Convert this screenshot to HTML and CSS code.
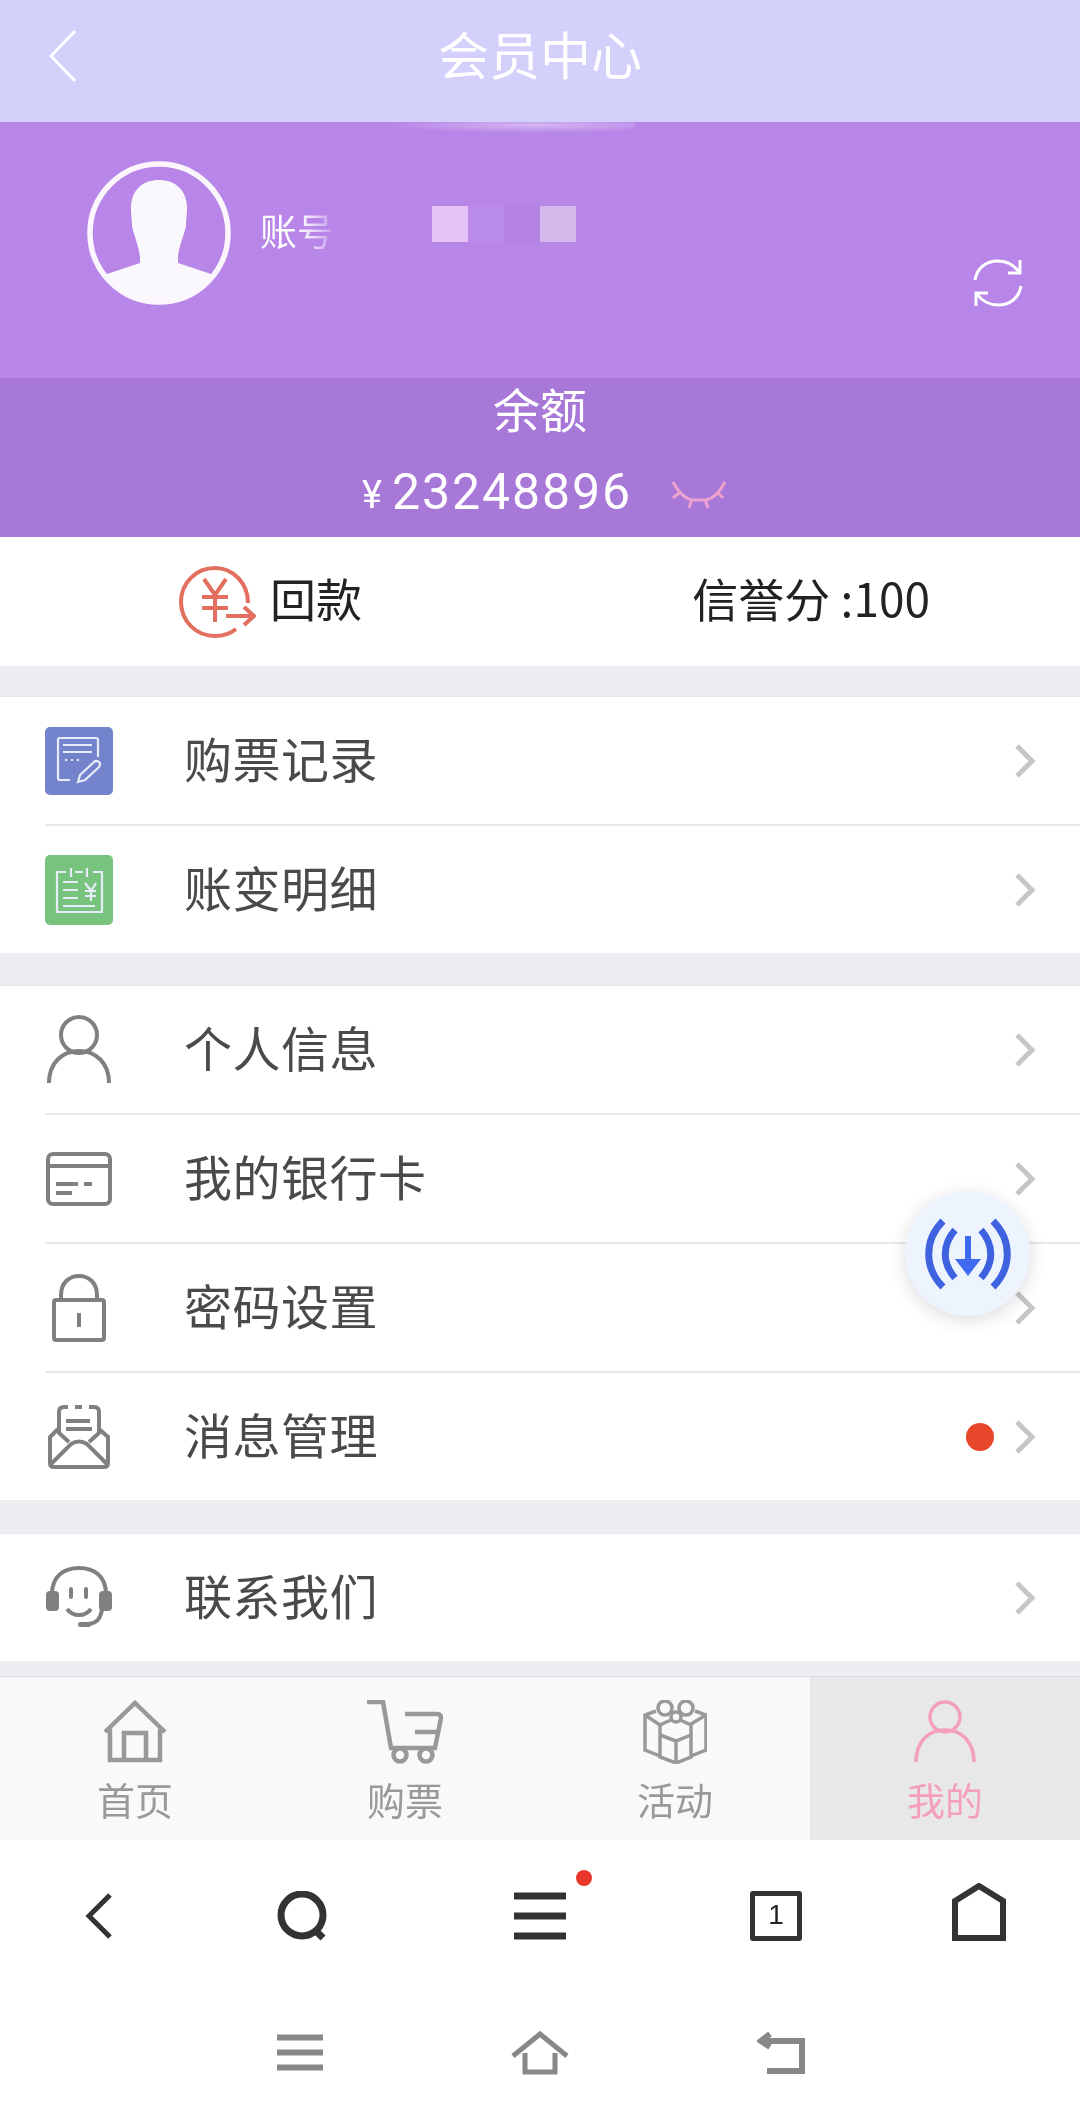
FILE: index.html
```html
<!DOCTYPE html>
<html lang="zh-CN">
  <head>
    <meta charset="UTF-8" />
    <title>会员中心</title>
    <link rel="stylesheet" href="styles.css">
  </head>
  <body>
    <div class="page">
      <!-- Header -->
      <header class="topbar">
        <svg class="top-back" width="28" height="54" viewBox="0 0 28 54"><path d="M26 2 2 27l24 25" /></svg>
        <h1 class="top-title">会员中心</h1>
      </header>

      <!-- Account panel -->
      <section class="account">
        <div class="account-glow"></div>
        <svg class="avatar" width="146" height="146" viewBox="0 0 146 146">
          <circle cx="73" cy="73" r="69" fill="none" stroke="#fbf6fd" stroke-width="5.5" />
          <path fill="#fbf8fd" d="M73 20c-16 0-28 10-28 28 0 8 1 12 1 16-1 4 8 24 8 34v5L18 115a69 69 0 0 0 110 0L92 103v-5c0-10 9-30 8-34 0-4 1-8 1-16 0-18-12-28-28-28z" />
        </svg>
        <span class="account-label">账号</span>
        <div class="mosaic">
          <i class="m1"></i><i class="m2"></i><i class="m3"></i><i class="m4"></i>
        </div>
        <svg class="refresh" width="52" height="52" viewBox="0 0 52 52">
          <path d="M3 23C5 11 14 4 26 4c9 0 16 4 21 11M49 29c-2 12-11 19-23 19-9 0-16-4-21-11" />
          <path d="M48 3v13H36M4 49V36h12" />
        </svg>
      </section>

      <!-- Balance -->
      <section class="balance">
        <div class="balance-label">余额</div>
        <div class="balance-amount">
          <span class="yen">¥</span><span class="amount">23248896</span>
          <svg class="eye" width="54" height="28" viewBox="0 0 54 28">
            <path d="M1 1c6 11 13 18 21 18h10c8 0 15-7 21-18M7 12l-6 5M20 18l-3 9M33 18l3 9M46 12l5 5" />
          </svg>
        </div>
      </section>

      <!-- Repay / credit -->
      <section class="quick">
        <div class="quick-left">
          <svg width="78" height="74" viewBox="0 0 78 74">
            <path class="q-ring" d="M70 38C70 18 55 3 37 3 18 3 3 18 3 37s15 34 34 34c8 0 15-2 21-7" />
            <path class="q-ring" d="M26 14l11 16 11-16M24 32h26M24 43h26M37 30v27M48 51h28M66 42l10 9-10 9" />
          </svg>
          <span>回款</span>
        </div>
        <div class="quick-right">信誉分 :100</div>
      </section>

      <div class="gap gap-a"></div>

      <section class="group">
        <div class="row">
          <span class="row-icon">
            <svg width="68" height="68" viewBox="0 0 68 68">
              <rect width="68" height="68" rx="5" fill="#7484cc" />
              <path class="tile" d="M53 30V13q0-2-2-2H15q-2 0-2 2v38q0 2 2 2h10M18 18h29M18 25h29M20 33h2M26 33h2M32 33h2" />
              <path class="tile" d="M33 55l2-7 14-13q2-2 5 0 2 2 0 5L40 53z" />
            </svg>
          </span>
          <span class="row-text">购票记录</span>
          <svg class="chev" width="22" height="36" viewBox="0 0 22 36"><path d="M3 3l15 15L3 33" /></svg>
        </div>
        <div class="row">
          <span class="row-icon">
            <svg width="68" height="70" viewBox="0 0 68 70">
              <rect width="68" height="70" rx="5" fill="#78c47e" />
              <path class="tile" d="M21 17h-9v40h45V17h-9M30 17h8M26 13v9M42 13v9M18 27h15M18 35h15M18 43h15M18 51h32" />
              <path class="tile" d="M40 28l6 8 5-8M40 36h11M40 41h11M46 36v10" />
            </svg>
          </span>
          <span class="row-text">账变明细</span>
          <svg class="chev" width="22" height="36" viewBox="0 0 22 36"><path d="M3 3l15 15L3 33" /></svg>
        </div>
      </section>

      <div class="gap"></div>

      <section class="group">
        <div class="row">
          <span class="row-icon">
            <svg class="line" width="66" height="72" viewBox="0 0 66 72">
              <circle cx="33" cy="21" r="18" />
              <path d="M3 69c0-20 13-32 30-32s30 12 30 32" />
            </svg>
          </span>
          <span class="row-text">个人信息</span>
          <svg class="chev" width="22" height="36" viewBox="0 0 22 36"><path d="M3 3l15 15L3 33" /></svg>
        </div>
        <div class="row">
          <span class="row-icon">
            <svg class="line" width="66" height="54" viewBox="0 0 66 54">
              <rect x="2" y="2" width="62" height="50" rx="5" />
              <path d="M2 14h62M10 32h22M10 41h16M38 32h8" />
            </svg>
          </span>
          <span class="row-text">我的银行卡</span>
          <svg class="chev" width="22" height="36" viewBox="0 0 22 36"><path d="M3 3l15 15L3 33" /></svg>
        </div>
        <div class="row">
          <span class="row-icon">
            <svg class="line" width="54" height="68" viewBox="0 0 54 68">
              <rect x="2" y="26" width="50" height="40" rx="2" />
              <path d="M9 26V21C9 9 17 2 27 2s18 7 18 19v5" />
              <path d="M27 39v14" stroke-width="4" />
            </svg>
          </span>
          <span class="row-text">密码设置</span>
          <svg class="chev" width="22" height="36" viewBox="0 0 22 36"><path d="M3 3l15 15L3 33" /></svg>
        </div>
        <div class="row">
          <span class="row-icon">
            <svg class="line" width="62" height="64" viewBox="0 0 62 64">
              <path d="M11 29V7q0-5 5-5h4M27 2h7M41 2h5q5 0 5 5v22M18 16h24M18 24h26" />
              <path d="M10 24 2 32v26q0 4 4 4h50q4 0 4-4V32l-9-8" />
              <path d="M2 60l21-21q8-5 16 0l21 21" />
              <path d="M11 28l10 9M51 28l-10 9" />
            </svg>
          </span>
          <span class="row-text">消息管理</span>
          <span class="row-dot"></span>
          <svg class="chev" width="22" height="36" viewBox="0 0 22 36"><path d="M3 3l15 15L3 33" /></svg>
        </div>
      </section>

      <div class="gap gap-c"></div>

      <section class="group">
        <div class="row">
          <span class="row-icon">
            <svg class="line" width="66" height="64" viewBox="0 0 66 64">
              <path d="M6 28C6 10 18 2 33 2s27 8 27 26" />
              <rect class="solid" x="0" y="25" width="13" height="20" rx="4" />
              <rect class="solid" x="53" y="25" width="13" height="20" rx="4" />
              <path d="M25 23v8M40 23v8" stroke-linecap="round" />
              <path d="M21 43c6 8 18 8 24 0M56 44c-2 9-5 13-13 14" />
              <rect class="solid" x="32" y="56" width="13" height="5" rx="2.5" />
            </svg>
          </span>
          <span class="row-text">联系我们</span>
          <svg class="chev" width="22" height="36" viewBox="0 0 22 36"><path d="M3 3l15 15L3 33" /></svg>
        </div>
      </section>

      <div class="gap gap-last"></div>

      <!-- Tab bar -->
      <nav class="tabs">
        <div class="tab">
          <svg class="tab-line tab-thick" width="64" height="64" viewBox="0 0 64 64">
            <path d="M2 32 32 3l30 29M7 29v31h50V29M21 60V33h22v27" />
          </svg>
          <span>首页</span>
        </div>
        <div class="tab">
          <svg class="tab-line tab-thick" width="76" height="64" viewBox="0 0 76 64">
            <path d="M0 2h16l8 46h44l6-30q0-4-4-4H38M48 32h23" />
            <circle cx="33" cy="55" r="6.5" />
            <circle cx="59" cy="55" r="6.5" />
          </svg>
          <span>购票</span>
        </div>
        <div class="tab">
          <svg class="tab-line" width="64" height="64" viewBox="0 0 64 64">
            <circle cx="22" cy="8" r="7" /><circle cx="43" cy="8" r="7" /><circle cx="33" cy="17" r="5" />
            <path d="M13 11 2 15v35l15 6M52 11l11 4v35l-15 6M2 15l15 10M63 15l-15 9" />
            <path d="M28 20 17 25v32l16 6 15-6V25l-11-5M17 35l16 6 15-6M33 41v22" />
          </svg>
          <span>活动</span>
        </div>
        <div class="tab tab-active">
          <svg class="tab-line" width="62" height="64" viewBox="0 0 62 64">
            <circle cx="31" cy="17" r="15" />
            <path d="M2 62c0-20 12-32 29-32s29 12 29 32" />
          </svg>
          <span>我的</span>
        </div>
      </nav>

      <!-- Browser toolbar -->
      <div class="browser">
        <svg class="bar-icon bar-back" width="28" height="48" viewBox="0 0 28 48"><path d="M25 3 4 24l21 21" /></svg>
        <svg class="bar-icon bar-search" width="52" height="50" viewBox="0 0 52 50">
          <circle cx="25" cy="24" r="21" /><path d="M37 38l9 9" />
        </svg>
        <div class="bar-menu">
          <svg class="bar-icon bar-thick" width="52" height="48" viewBox="0 0 52 48"><path d="M0 4h52M0 24h52M0 44h52" /></svg>
          <span class="bar-dot"></span>
        </div>
        <div class="bar-tabs">1</div>
        <svg class="bar-icon bar-home" width="54" height="58" viewBox="0 0 54 58">
          <path d="M3 18 27 3l24 15v37H3z" />
        </svg>
      </div>

      <!-- System nav -->
      <div class="sysnav">
        <svg class="nav-icon" width="46" height="38" viewBox="0 0 46 38"><path d="M0 3.5h46M0 18.5h46M0 33.5h46" /></svg>
        <svg class="nav-icon nav-thin" width="58" height="44" viewBox="0 0 58 44"><path d="M2 25 29 3l27 22M14 22v19h30V22" /></svg>
        <svg class="nav-icon" width="48" height="42" viewBox="0 0 48 42"><path d="M13 2 4 9l9 6M4 9h41v30H10" /></svg>
      </div>

      <!-- Floating download button -->
      <div class="float-btn">
        <svg width="86" height="72" viewBox="0 0 86 72">
          <path class="wave" d="M18 3C-1 22-1 50 18 69M68 3c19 19 19 47 0 66M30 12c-13 15-13 33 0 48M56 12c13 15 13 33 0 48" />
          <path fill="#3f6bf0" d="M40 18h6v23h10L43 58 30 41h10z" />
        </svg>
      </div>
    </div>
  </body>
</html>
```

FILE: styles.css
```css
/* Global */
html,
body {
  margin: 0;
  height: 100%;
  background: #fff;
  font-family: "Noto Sans CJK SC", "Noto Sans", sans-serif;
  color: #444;
}
.page {
  position: relative;
  width: 1080px;
  height: 2114px;
  overflow: hidden;
  filter: blur(0.5px);
}
svg {
  display: block;
}
/* Header */
.topbar {
  position: relative;
  display: flex;
  align-items: center;
  justify-content: center;
  height: 122px;
  background: #d3d0fb;
}
.top-back {
  position: absolute;
  left: 49px;
  top: 29px;
  fill: none;
  stroke: #fff;
  stroke-width: 3;
}
.top-title {
  margin: 0;
  padding-bottom: 16px;
  font-size: 51px;
  font-weight: 400;
  color: #fff;
  line-height: 1;
}
/* Account panel */
.account {
  position: relative;
  display: flex;
  align-items: flex-start;
  height: 256px;
  padding: 38px 56px 0 86px;
  box-sizing: border-box;
  background: #b885e8;
}
.account-glow {
  position: absolute;
  left: 385px;
  top: 0;
  width: 250px;
  height: 11px;
  background: radial-gradient(ellipse at 60% 30%, rgba(255, 255, 255, 0.4), rgba(255, 255, 255, 0) 70%);
}
.account-label {
  margin: 47px 0 0 28px;
  width: 76px;
  font-size: 37px;
  line-height: 46px;
  background: linear-gradient(90deg, #fff 50%, rgba(255, 255, 255, 0.7) 70%, rgba(255, 255, 255, 0.1));
  -webkit-background-clip: text;
  background-clip: text;
  color: transparent;
}
.mosaic {
  display: flex;
  margin: 46px 0 0 96px;
}
.mosaic i {
  display: block;
  width: 36px;
  height: 36px;
}
.m1 {
  background: #e6c3f6;
}
.m2 {
  background: #b98aea;
}
.m3 {
  background: #b583e2;
}
.m4 {
  background: #d6b9ec;
}
.refresh {
  margin: 97px 0 0 auto;
  fill: none;
  stroke: #fff;
  stroke-width: 3;
}
/* Balance */
.balance {
  height: 159px;
  background: #a878d8;
  color: #fff;
  text-align: center;
}
.balance-label {
  padding-top: 1px;
  font-size: 47px;
  line-height: 58px;
}
.balance-amount {
  display: flex;
  align-items: center;
  justify-content: center;
  height: 68px;
  margin-top: 21px;
  padding-left: 8px;
  font-family: Roboto, sans-serif;
}
.yen {
  font-size: 38px;
  margin-right: 10px;
  margin-top: 6px;
}
.amount {
  font-size: 50px;
  letter-spacing: 1.9px;
}
.eye {
  margin-left: 40px;
  margin-top: 6px;
  fill: none;
  stroke: #eda2d0;
  stroke-width: 3;
}
/* Repay / credit row */
.quick {
  display: flex;
  align-items: center;
  height: 129px;
  font-size: 46px;
  color: #222;
  background: #fff;
}
.quick-left {
  display: flex;
  align-items: center;
  gap: 14px;
  margin-left: 178px;
}
.quick-left span,
.quick-right {
  padding-bottom: 10px;
}
.quick-right {
  margin-left: auto;
  margin-right: 150px;
}
.q-ring {
  fill: none;
  stroke: #e36f5f;
  stroke-width: 4;
}
/* Menu groups */
.gap {
  height: 32px;
  background: #eeeef2;
}
.gap-a {
  height: 30px;
}
.gap-c {
  height: 33px;
}
.gap-last {
  height: 15px;
  border-bottom: 1px solid #dcdce0;
}
.group {
  border-top: 1px solid #e6e6e8;
  background: #fff;
}
.row {
  display: flex;
  align-items: center;
  height: 129px;
  box-sizing: border-box;
  margin-left: 45px;
  padding-right: 44px;
  border-bottom: 2px solid #e8e8e8;
}
.row:last-child {
  height: 127px;
  border-bottom: none;
}
.row-icon {
  display: flex;
  justify-content: center;
  width: 68px;
  margin-right: 71px;
}
.row-text {
  flex: 1;
  padding-bottom: 8px;
  font-size: 48px;
  letter-spacing: 0.5px;
  color: #4a4a4a;
}
.row-dot {
  width: 28px;
  height: 28px;
  margin-right: 20px;
  border-radius: 50%;
  background: #e8462a;
}
.chev {
  fill: none;
  stroke: #c6c6c6;
  stroke-width: 5;
}
.tile {
  fill: none;
  stroke: #e6ecfa;
  stroke-width: 2.2;
}
.line {
  fill: none;
  stroke: #808080;
  stroke-width: 4;
}
.line .solid {
  fill: #808080;
  stroke: none;
}
/* Tab bar */
.tabs {
  display: flex;
  height: 163px;
  background: #f9f9f9;
}
.tab {
  display: flex;
  flex: 1;
  flex-direction: column;
  align-items: center;
  padding-top: 23px;
  box-sizing: border-box;
  font-size: 38px;
  line-height: 44px;
  color: #999;
}
.tab span {
  margin-top: 13px;
}
.tab-line {
  fill: none;
  stroke: #999;
  stroke-width: 3.5;
}
.tab-thick {
  stroke-width: 4.5;
}
.tab-active {
  background: #e8e8e8;
  color: #f4a0bc;
}
.tab-active .tab-line {
  stroke: #f4a0bc;
}
/* Browser toolbar */
.browser {
  display: grid;
  grid-template-columns: 198px 210px 264px 208px 198px;
  justify-items: center;
  align-items: center;
  height: 160px;
  padding-bottom: 8px;
  box-sizing: border-box;
}
.bar-icon {
  fill: none;
  stroke: #333;
  stroke-width: 6;
}
.bar-back {
  stroke-width: 5;
}
.bar-search {
  stroke-width: 7;
}
.bar-thick {
  stroke-width: 7;
}
.bar-home {
  margin-top: -8px;
}
.bar-menu {
  position: relative;
}
.bar-dot {
  position: absolute;
  right: -26px;
  top: -22px;
  width: 16px;
  height: 16px;
  border-radius: 50%;
  background: #e8382c;
}
.bar-tabs {
  width: 52px;
  height: 50px;
  box-sizing: border-box;
  border: 5px solid #333;
  border-radius: 3px;
  font-family: "Liberation Sans", sans-serif;
  font-size: 28px;
  line-height: 38px;
  text-align: center;
  color: #222;
}
/* System nav */
.sysnav {
  display: flex;
  align-items: center;
  justify-content: space-between;
  height: 114px;
  padding: 0 275px 8px 277px;
  box-sizing: border-box;
}
.nav-icon {
  fill: none;
  stroke: #888;
  stroke-width: 6;
}
.nav-thin {
  stroke-width: 5;
}
/* Floating button */
.float-btn {
  position: absolute;
  left: 905px;
  top: 1191px;
  display: flex;
  align-items: center;
  justify-content: center;
  width: 125px;
  height: 125px;
  border-radius: 50%;
  background: #eef4fd;
  box-shadow: 0 4px 18px rgba(0, 0, 0, 0.14);
}
.wave {
  fill: none;
  stroke: #3f63e0;
  stroke-width: 7;
}
```
